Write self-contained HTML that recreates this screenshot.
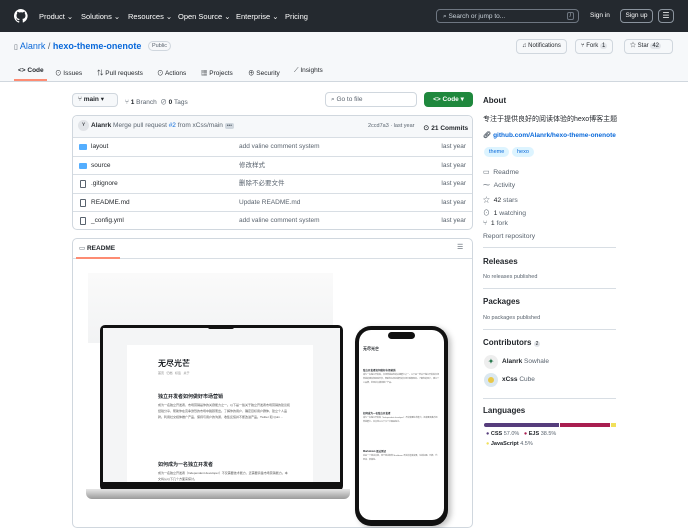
<!DOCTYPE html>
<html><head><meta charset="utf-8"><style>
*{box-sizing:border-box;margin:0;padding:0}
body{width:688px;height:512px;overflow:hidden;background:#fff;font-family:"Liberation Sans","Noto Sans CJK SC",sans-serif;color:#1f2328;position:relative;font-size:7px}
.a{position:absolute;white-space:nowrap}
.top{position:absolute;left:0;top:0;width:688px;height:32px;background:#24292f}
.nav{color:#fff;font-size:7.5px;top:12px}
.rh{position:absolute;left:0;top:32px;width:688px;height:50px;background:#f6f8fa;border-bottom:1px solid #d0d7de}
.btn{position:absolute;border:1px solid #d0d7de;border-radius:4px;background:#f6f8fa;font-size:6px;color:#1f2328;padding:0 5px;line-height:13px}
.tab{top:67px;font-size:6.5px;color:#1f2328}
.row{position:absolute;left:73px;width:399px;height:18.4px;border-top:1px solid #d8dee4;font-size:6.5px}
.row span{position:absolute;top:5px;line-height:8px;height:8px}
.row .fo{left:6px;top:6px;width:8px;height:6px;background:#54aeff;border-radius:1px}
.row .fi{left:7px;top:5px;width:6px;height:8px;border:1px solid #59636e;border-radius:1px}
.side{font-size:6.8px;color:#59636e}
.h{font-weight:bold;font-size:8px;color:#1f2328}
.hr{position:absolute;left:483px;width:133px;height:1px;background:#d8dee4}
</style></head><body>
<div class="top"></div>
<svg class="a" style="left:14px;top:9px" width="14" height="14" viewBox="0 0 16 16"><path fill="#fff" d="M8 0a8 8 0 0 0-2.5 15.6c.4 0 .5-.2.5-.4v-1.5c-2.200.5-2.700-1-2.700-1-.4-.9-.9-1.200-.9-1.200-.7-.5.1-.5.1-.5.8.1 1.200.8 1.200.8.7 1.300 1.900.9 2.300.7.1-.5.3-.9.5-1.100-1.800-.2-3.600-.9-3.600-4 0-.9.3-1.600.8-2.100-.1-.2-.4-1 .1-2.100 0 0 .7-.2 2.200.8a7.600 7.600 0 0 1 4 0c1.500-1 2.200-.8 2.200-.8.4 1.100.2 1.900.1 2.100.5.6.8 1.300.8 2.100 0 3.100-1.900 3.700-3.600 3.900.3.3.5.8.5 1.500v2.200c0 .2.1.5.6.4A8 8 0 0 0 8 0z"/></svg>
<div class="a nav" style="left:39px">Product ⌄</div>
<div class="a nav" style="left:81px">Solutions ⌄</div>
<div class="a nav" style="left:128px">Resources ⌄</div>
<div class="a nav" style="left:178px">Open Source ⌄</div>
<div class="a nav" style="left:236px">Enterprise ⌄</div>
<div class="a nav" style="left:285px">Pricing</div>
<div class="a" style="left:436px;top:9px;width:143px;height:14px;border:1px solid #6e7681;border-radius:4px;color:#c9d1d9;font-size:6.5px;padding:3px 0 0 6px">⌕ Search or jump to...<span style="position:absolute;right:4px;top:2px;border:1px solid #6e7681;border-radius:2px;padding:0 2px;font-size:5px">/</span></div>
<div class="a nav" style="left:590px;font-size:6.5px">Sign in</div>
<div class="a" style="left:620px;top:9px;width:33px;height:14px;border:1px solid #8b949e;border-radius:4px;color:#fff;font-size:6.5px;text-align:center;line-height:12px">Sign up</div>
<div class="a" style="left:658px;top:9px;width:16px;height:14px;border:1px solid #8b949e;border-radius:4px;color:#fff;font-size:8px;text-align:center;line-height:12px">☰</div>
<div class="rh"></div>
<div class="a" style="left:14px;top:41px;font-size:9px;color:#0969da"><span style="color:#59636e;font-size:7px">▯</span> Alanrk <span style="color:#59636e">/</span> <b>hexo-theme-onenote</b></div>
<div class="a" style="left:148px;top:41px;border:1px solid #d0d7de;border-radius:6px;font-size:5.5px;color:#59636e;padding:1px 3px">Public</div>
<div class="btn" style="left:516px;top:39px">♫ Notifications</div>
<div class="btn" style="left:575px;top:39px">⑂ Fork <span style="background:#e1e4e8;border-radius:5px;padding:0 2px">1</span></div>
<div class="btn" style="left:624px;top:39px;width:49px">☆ Star <span style="background:#e1e4e8;border-radius:5px;padding:0 2px">42</span></div>
<div class="a tab" style="left:18px"><b>&lt;&gt; Code</b></div>
<div class="a" style="left:14px;top:79px;width:33px;height:2px;background:#fd8c73"></div>
<div class="a tab" style="left:55px">⊙ Issues</div>
<div class="a tab" style="left:97px">⇅ Pull requests</div>
<div class="a tab" style="left:157px">⊙ Actions</div>
<div class="a tab" style="left:201px">▦ Projects</div>
<div class="a tab" style="left:248px">⊕ Security</div>
<div class="a tab" style="left:294px">⟋ Insights</div>

<div class="btn" style="left:72px;top:93px;width:46px;height:14px;line-height:12px;font-size:6.5px">⑂ <b>main</b> ▾</div>
<div class="a" style="left:125px;top:96px;font-size:6.5px;color:#59636e">⑂ <b style="color:#1f2328">1</b> Branch &nbsp;⊘ <b style="color:#1f2328">0</b> Tags</div>
<div class="a" style="left:325px;top:92px;width:92px;height:15px;border:1px solid #d0d7de;border-radius:4px;font-size:6.5px;color:#59636e;padding:3px 0 0 5px">⌕ Go to file</div>
<div class="a" style="left:424px;top:92px;width:49px;height:15px;background:#1f883d;border-radius:4px;color:#fff;font-size:6.5px;font-weight:bold;text-align:center;line-height:15px">&lt;&gt; Code ▾</div>

<div class="a" style="left:72px;top:115px;width:401px;height:115px;border:1px solid #d0d7de;border-radius:5px"></div>
<div class="a" style="left:73px;top:116px;width:399px;height:21px;background:#f6f8fa;border-radius:5px 5px 0 0"></div>
<div class="a" style="left:78px;top:120px;width:11px;height:11px;border-radius:50%;background:#e1e4e8;font-size:6px;text-align:center;line-height:11px">ʏ</div>
<div class="a" style="left:91px;top:122px;font-size:6.5px"><b>Alanrk</b> <span style="color:#59636e">Merge pull request <span style="color:#0969da">#2</span> from xCss/main</span> <span style="background:#d0d7de;color:#59636e;font-size:5px;padding:0 2px;border-radius:2px">•••</span></div>
<div class="a" style="left:368px;top:123px;font-size:5.5px;color:#59636e">2ccd7a3 · last year</div>
<div class="a" style="left:423px;top:122px;font-size:6.5px"><b>⊙ 21 Commits</b></div>
<div class="row" style="top:137px"><span class="fo"></span><span style="left:18px">layout</span><span style="left:166px;color:#59636e">add valine comment system</span><span style="right:6px;color:#59636e">last year</span></div>
<div class="row" style="top:155.5px"><span class="fo"></span><span style="left:18px">source</span><span style="left:166px;color:#59636e">修改样式</span><span style="right:6px;color:#59636e">last year</span></div>
<div class="row" style="top:174px"><span class="fi"></span><span style="left:18px">.gitignore</span><span style="left:166px;color:#59636e">删除不必要文件</span><span style="right:6px;color:#59636e">last year</span></div>
<div class="row" style="top:192.5px"><span class="fi"></span><span style="left:18px">README.md</span><span style="left:166px;color:#59636e">Update README.md</span><span style="right:6px;color:#59636e">last year</span></div>
<div class="row" style="top:211px"><span class="fi"></span><span style="left:18px">_config.yml</span><span style="left:166px;color:#59636e">add valine comment system</span><span style="right:6px;color:#59636e">last year</span></div>

<div class="a" style="left:72px;top:238px;width:401px;height:290px;border:1px solid #d0d7de;border-radius:5px"></div>
<div class="a" style="left:73px;top:258px;width:399px;height:1px;background:#d8dee4"></div>
<div class="a" style="left:79px;top:244px;font-size:6.5px"><span style="color:#59636e">▭</span> <b>README</b></div>
<div class="a" style="left:76px;top:257px;width:44px;height:2px;background:#fd8c73"></div>
<div class="a" style="left:457px;top:243px;font-size:7px;color:#59636e">☰</div>
<div class="a" style="left:88px;top:273px;width:245px;height:70px;background:linear-gradient(#fafafa,#f2f3f4)"></div>
<div class="a" style="left:100px;top:325px;width:243px;height:166px;background:#111;border-radius:5px"></div>
<div class="a" style="left:103px;top:328px;width:237px;height:154px;background:#f4f5f6"></div>
<div class="a" style="left:127px;top:345px;width:186px;height:137px;background:#fff"></div>
<div class="a" style="left:208px;top:325px;width:26px;height:4px;background:#111;border-radius:0 0 2px 2px"></div>
<div class="a" style="left:86px;top:489px;width:264px;height:10px;background:linear-gradient(#e6e6e6,#9a9a9a);border-radius:0 0 6px 6px"></div>
<div class="a" style="left:158px;top:358px;font-size:8px;font-weight:bold">无尽光芒</div>
<div class="a" style="left:158px;top:371px;font-size:3px;color:#888">首页 &nbsp; 归档 &nbsp; 标签 &nbsp; 关于</div>
<div class="a" style="left:158px;top:393px;font-size:5px;font-weight:bold">独立开发者如何做好市场营销</div>
<div class="a" style="left:158px;top:403px;width:132px;font-size:3px;line-height:5.8px;color:#555;white-space:normal">成为一名独立开发者，市场营销是你的关键能力之一。以下是一些关于独立开发者市场营销的建议和经验分享，帮助你在竞争激烈的市场中脱颖而出。了解你的用户，确定目标用户群体，建立个人品牌。利用社交媒体推广产品，保持与用户的沟通，收集反馈并不断改进产品。Twitter 和 Quin ...</div>
<div class="a" style="left:158px;top:461px;font-size:5px;font-weight:bold">如何成为一名独立开发者</div>
<div class="a" style="left:158px;top:471px;width:132px;font-size:3px;line-height:5.8px;color:#555;white-space:normal">成为一名独立开发者（Independent developer）不仅需要技术能力，还需要具备市场营销能力。本文将从以下几个方面来探讨。</div>
<div class="a" style="left:355px;top:326px;width:93px;height:200px;background:#111;border-radius:16px;box-shadow:3px 2px 6px rgba(0,0,0,.25)"></div>
<div class="a" style="left:359px;top:330px;width:85px;height:190px;background:#fff;border-radius:12px"></div>
<div class="a" style="left:388px;top:332px;width:27px;height:7px;background:#111;border-radius:4px"></div>
<div class="a" style="left:363px;top:346px;font-size:4px;font-weight:bold">无尽光芒</div>
<div class="a" style="left:363px;top:368px;font-size:2.5px;font-weight:bold">独立开发者如何做好市场营销</div>
<div class="a" style="left:363px;top:373px;width:76px;font-size:2px;line-height:4px;color:#666;white-space:normal">成为一名独立开发者，市场营销是你的关键能力之一。以下是一些关于独立开发者市场营销的建议和经验分享，帮助你在竞争激烈的市场中脱颖而出。了解你的用户，建立个人品牌，利用社交媒体推广产品。</div>
<div class="a" style="left:363px;top:411px;font-size:2.5px;font-weight:bold">如何成为一名独立开发者</div>
<div class="a" style="left:363px;top:416px;width:76px;font-size:2px;line-height:4px;color:#666;white-space:normal">成为一名独立开发者（Independent developer）不仅需要技术能力，还需要具备市场营销能力。本文将从以下几个方面来探讨。</div>
<div class="a" style="left:363px;top:449px;font-size:2.5px;font-weight:bold">Markdown 语法测试</div>
<div class="a" style="left:363px;top:454px;width:76px;font-size:2px;line-height:4px;color:#666;white-space:normal">这是一个测试文章，用于测试各种 Markdown 语法的渲染效果，包括标题、列表、代码块、表格等。</div>

<div class="a h" style="left:483px;top:96px">About</div>
<div class="a" style="left:483px;top:114px;font-size:7px">专注于提供良好的阅读体验的hexo博客主题</div>
<div class="a" style="left:483px;top:131px;font-size:6.5px;color:#0969da;font-weight:bold"><span style="color:#59636e">🔗︎</span> github.com/Alanrk/hexo-theme-onenote</div>
<div class="a" style="left:484px;top:147px;background:#ddf4ff;color:#0969da;border-radius:8px;font-size:5.5px;padding:2px 5px">theme</div>
<div class="a" style="left:512px;top:147px;background:#ddf4ff;color:#0969da;border-radius:8px;font-size:5.5px;padding:2px 5px">hexo</div>
<div class="a side" style="left:483px;top:168px">▭ &nbsp;Readme</div>
<div class="a side" style="left:483px;top:181px">⁓ &nbsp;Activity</div>
<div class="a side" style="left:483px;top:194px">☆ &nbsp;<b style="color:#1f2328;font-weight:normal">42</b> stars</div>
<div class="a side" style="left:483px;top:207px">⊙ &nbsp;<b style="color:#1f2328;font-weight:normal">1</b> watching</div>
<div class="a side" style="left:483px;top:220px">⑂ &nbsp;<b style="color:#1f2328;font-weight:normal">1</b> fork</div>
<div class="a side" style="left:483px;top:233px">Report repository</div>
<div class="hr" style="top:247px"></div>
<div class="a h" style="left:483px;top:257px">Releases</div>
<div class="a side" style="left:483px;top:274px;font-size:5.5px">No releases published</div>
<div class="hr" style="top:288px"></div>
<div class="a h" style="left:483px;top:297px">Packages</div>
<div class="a side" style="left:483px;top:315px;font-size:5.5px">No packages published</div>
<div class="hr" style="top:329px"></div>
<div class="a h" style="left:483px;top:338px">Contributors <span style="background:#e1e4e8;border-radius:5px;font-size:5px;padding:0 2px;font-weight:normal">2</span></div>
<div class="a" style="left:484px;top:355px;width:14px;height:14px;border-radius:50%;background:#eee;color:#2a7a50;font-size:8px;text-align:center;line-height:14px">✦</div>
<div class="a" style="left:502px;top:358px;font-size:6.5px"><b>Alanrk</b> <span style="color:#59636e">Sowhale</span></div>
<div class="a" style="left:484px;top:373px;width:14px;height:14px;border-radius:50%;background:#dbe8f0"><div style="margin:4px;width:6px;height:6px;background:#e8c84a;border-radius:50%"></div></div>
<div class="a" style="left:502px;top:376px;font-size:6.5px"><b>xCss</b> <span style="color:#59636e">Cube</span></div>
<div class="hr" style="top:398px"></div>
<div class="a h" style="left:483px;top:406px">Languages</div>
<div class="a" style="left:484px;top:423px;width:75px;height:4px;background:#563d7c;border-radius:2px 0 0 2px"></div>
<div class="a" style="left:560px;top:423px;width:50px;height:4px;background:#a91e50"></div>
<div class="a" style="left:611px;top:423px;width:5px;height:4px;background:#f1e05a"></div>
<div class="a" style="left:486px;top:431px;font-size:5.5px"><span style="color:#563d7c">●</span> <b>CSS</b> <span style="color:#59636e">57.0%</span> &nbsp;&nbsp;<span style="color:#a91e50">●</span> <b>EJS</b> <span style="color:#59636e">38.5%</span></div>
<div class="a" style="left:486px;top:441px;font-size:5.5px"><span style="color:#f1e05a">●</span> <b>JavaScript</b> <span style="color:#59636e">4.5%</span></div>
</body></html>
